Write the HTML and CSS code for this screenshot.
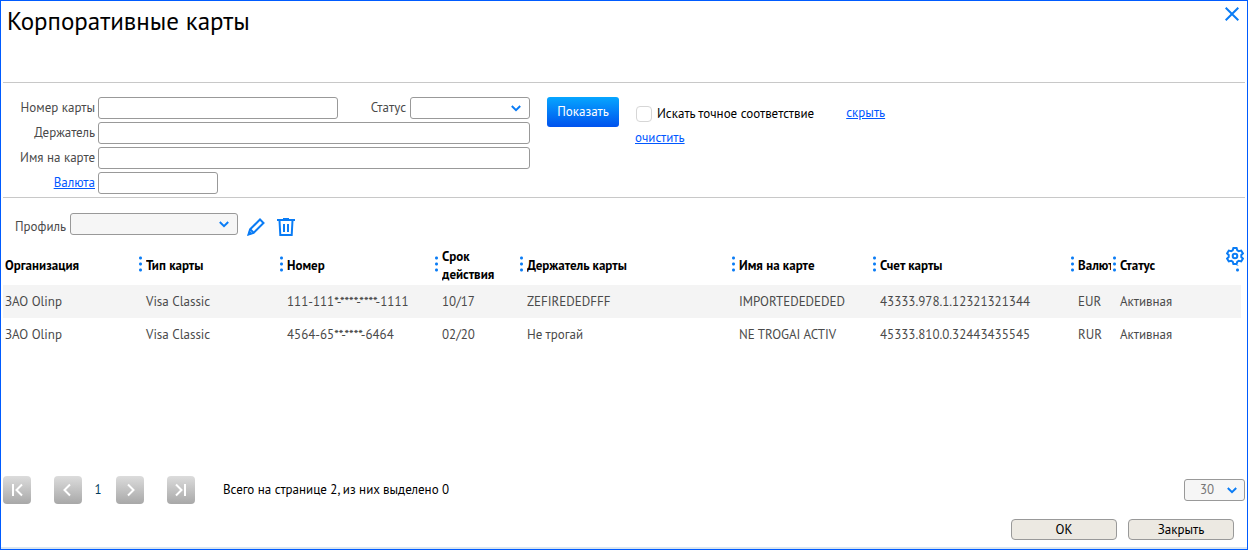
FILE: index.html
```html
<!DOCTYPE html>
<html lang="ru">
<head>
<meta charset="utf-8">
<meta name="viewport" content="width=device-width, initial-scale=1">
<title>Корпоративные карты</title>
<link rel="stylesheet" href="styles.css">
</head>
<body>
<main class="window">
  <header class="window-header">
    <h1 class="title">Корпоративные карты</h1>
    <button class="icon-button close" type="button" aria-label="Закрыть окно">
      <svg width="14" height="14" viewBox="0 0 14 14"><path d="M.7.7l12.600 12.600M13.300.7L.7 13.300"/></svg>
    </button>
  </header>

  <form class="filter">
    <div class="fields">
      <label class="label" for="number">Номер карты</label>
      <div class="field-line">
        <input class="input number" id="number" type="text">
        <label class="label status-label" for="status">Статус</label>
        <select class="input select status" id="status"><option></option></select>
      </div>
      <label class="label" for="holder">Держатель</label>
      <input class="input" id="holder" type="text">
      <label class="label" for="name">Имя на карте</label>
      <input class="input" id="name" type="text">
      <a class="link label" href="#currency" id="currency-label">Валюта</a>
      <input class="input currency" id="currency" type="text" aria-labelledby="currency-label">
    </div>
    <button class="show" type="button">Показать</button>
    <div class="options">
      <label class="exact"><input class="checkbox" type="checkbox">Искать точное соответствие</label>
      <a class="link clear" href="#clear">очистить</a>
    </div>
    <a class="link hide" href="#hide">скрыть</a>
  </form>

  <div class="profile-bar">
    <label class="profile-label" for="profile">Профиль</label>
    <select class="input select muted profile" id="profile"><option></option></select>
    <button class="icon-button tool" type="button" aria-label="Изменить">
      <svg width="18" height="18" viewBox="0 0 18 18"><path d="M1.500 16.500l1.600-5.100L13 1.500l3.500 3.500L6.600 14.900z"/><path d="M3.200 11.300l3.500 3.500"/><path class="solid" d="M.5 17.500l1.700-5 3.300 3.300z"/></svg>
    </button>
    <button class="icon-button tool trash" type="button" aria-label="Удалить">
      <svg width="18" height="18" viewBox="0 0 18 18"><path d="M0 2h18M6 1h6M2.500 2.500l.8 14.500h11.400l.8-14.500M7 6v8M11 6v8"/></svg>
    </button>
  </div>

  <section class="cards">
    <button class="icon-button gear" type="button" aria-label="Настройка столбцов">
      <svg width="18" height="18" viewBox="0 0 18 18"><path d="M7.400 1h3.200l.7 2.300 1.500.9 2.400-.6 1.700 2.800L15.300 8v2l1.600 1.600-1.700 2.800-2.400-.6-1.500.9-.7 2.300H7.400l-.7-2.300-1.500-.9-2.400.6-1.700-2.800L2.700 10V8L1.100 6.400l1.700-2.800 2.400.6 1.500-.9z"/><circle cx="9" cy="9" r="2.300"/></svg>
    </button>
    <table class="table">
      <colgroup>
        <col class="c-org"><col class="c-type"><col class="c-number"><col class="c-term"><col class="c-holder"><col class="c-name"><col class="c-account"><col class="c-currency"><col class="c-status">
      </colgroup>
      <thead>
        <tr>
          <th scope="col"><div class="head">Организация</div></th>
          <th scope="col"><div class="head">Тип карты</div></th>
          <th scope="col"><div class="head">Номер</div></th>
          <th scope="col"><div class="head wrap">Срок действия</div></th>
          <th scope="col"><div class="head">Держатель карты</div></th>
          <th scope="col"><div class="head">Имя на карте</div></th>
          <th scope="col"><div class="head">Счет карты</div></th>
          <th scope="col"><div class="head">Валюта</div></th>
          <th scope="col"><div class="head">Статус</div></th>
        </tr>
      </thead>
      <tbody>
        <tr><td>ЗАО Olinp</td><td>Visa Classic</td><td>111-111*-****-****-1111</td><td>10/17</td><td>ZEFIREDEDFFF</td><td>IMPORTEDEDEDED</td><td>43333.978.1.12321321344</td><td>EUR</td><td>Активная</td></tr>
        <tr><td>ЗАО Olinp</td><td>Visa Classic</td><td>4564-65**-****-6464</td><td>02/20</td><td>Не трогай</td><td>NE TROGAI ACTIV</td><td>45333.810.0.32443435545</td><td>RUR</td><td>Активная</td></tr>
      </tbody>
    </table>
  </section>

  <nav class="pager" aria-label="Страницы">
    <button class="page-button" type="button" aria-label="Первая страница"><svg width="28" height="28" viewBox="0 0 28 28"><path d="M10 8v12M19 8.500l-5.500 5.500 5.500 5.500"/></svg></button>
    <button class="page-button prev" type="button" aria-label="Предыдущая страница"><svg width="28" height="28" viewBox="0 0 28 28"><path d="M16 8.500L10.500 14l5.500 5.500"/></svg></button>
    <span class="page">1</span>
    <button class="page-button" type="button" aria-label="Следующая страница"><svg width="28" height="28" viewBox="0 0 28 28"><path d="M12 8.500l5.500 5.500-5.500 5.500"/></svg></button>
    <button class="page-button last" type="button" aria-label="Последняя страница"><svg width="28" height="28" viewBox="0 0 28 28"><path d="M9 8.500l5.500 5.500L9 19.500M18 8v12"/></svg></button>
    <span class="summary">Всего на странице 2, из них выделено 0</span>
    <select class="input select muted size" aria-label="Строк на странице"><option>30</option></select>
  </nav>

  <footer class="actions">
    <button class="action" type="button">OK</button>
    <button class="action" type="button">Закрыть</button>
  </footer>
</main>
</body>
</html>
```

FILE: styles.css
```css
* {
  box-sizing: border-box;
}

body {
  margin: 0;
  background: #fff;
  color: #4a4a4a;
  font: 13px/18px "PT Sans", "Noto Sans", "Open Sans", sans-serif;
}

button,
input,
select {
  margin: 0;
  font: inherit;
}

button {
  padding: 0;
  cursor: pointer;
}

.window {
  display: flex;
  flex-direction: column;
  min-height: 100vh;
  padding: 0 2px;
  border: 1px solid #005bff;
  box-shadow: inset 0 -2px #dae6ef;
}

.window-header {
  display: flex;
  justify-content: space-between;
  align-items: flex-start;
  min-height: 82px;
  border-bottom: 1px solid #c8c8c8;
}

.title {
  margin: 0;
  padding-left: 4px;
  color: #000;
  font-size: 25px;
  font-weight: 400;
  line-height: 40px;
}

.icon-button {
  display: flex;
  border: 0;
  background: none;
}

.icon-button svg {
  fill: none;
  stroke: #0a7cf5;
  stroke-width: 2;
}

.icon-button .solid {
  fill: #0a7cf5;
  stroke: none;
}

.close {
  padding: 6px;
}

.filter {
  display: flex;
  align-items: flex-start;
  padding: 14px 0 3px;
  border-bottom: 1px solid #c8c8c8;
}

.fields {
  display: grid;
  grid-template-columns: 92px minmax(0, 432px);
  gap: 3px;
}

.field-line {
  display: flex;
}

.label {
  justify-self: end;
  line-height: 22px;
}

.input {
  width: 100%;
  height: 22px;
  padding: 0 4px;
  border: 1px solid #999;
  border-radius: 3px;
  background-color: #fff;
  color: #4a4a4a;
}

.select {
  appearance: none;
  background-image: url("data:image/svg+xml,%3Csvg xmlns='http://www.w3.org/2000/svg' width='10' height='7'%3E%3Cpath d='M.8 1l4.200 4.200L9.200 1' fill='none' stroke='%230a7cf5' stroke-width='2'/%3E%3C/svg%3E");
  background-repeat: no-repeat;
  background-position: right 8px center;
}

.muted {
  background-color: #f6f6f6;
}

.number {
  flex: 0 1 240px;
}

.status-label {
  margin-left: auto;
}

.status {
  flex: 0 0 120px;
  margin-left: 4px;
}

.currency {
  width: 120px;
}

.link {
  color: #0057ff;
}

.show {
  width: 72px;
  height: 30px;
  margin-left: 17px;
  border: 0;
  border-radius: 3px;
  background: linear-gradient(#06a6ff, #0052ee);
  color: #fff;
}

.options {
  display: flex;
  flex-direction: column;
  align-items: flex-start;
  gap: 6px;
  padding: 8px 0 0 16px;
}

.exact {
  display: flex;
  align-items: center;
  gap: 5px;
  padding-left: 1px;
  color: #000;
}

.checkbox {
  appearance: none;
  width: 16px;
  height: 16px;
  border: 1px solid #d6d6d6;
  border-radius: 4px;
  background: #fff;
}

.checkbox:checked {
  background: #0a7cf5;
}

.hide {
  margin: 7px 0 0 32px;
}

.profile-bar {
  display: flex;
  align-items: flex-start;
  padding: 15px 0 12px 12px;
}

.profile-label {
  padding-top: 5px;
  line-height: 17px;
}

.profile {
  width: 168px;
  margin-left: 4px;
}

.tool {
  margin: 5px 0 0 9px;
}

.trash {
  margin-left: 12px;
}

.cards {
  position: relative;
  flex: 1;
  padding-right: 4px;
}

.gear {
  position: absolute;
  top: -1px;
  right: 1px;
  z-index: 1;
  background: #fff;
}

.table {
  width: 100%;
  border-collapse: collapse;
  table-layout: fixed;
}

.c-org,
.c-type,
.c-name {
  width: 141px;
}

.c-number {
  width: 155px;
}

.c-term {
  width: 85px;
}

.c-holder {
  width: 212px;
}

.c-account {
  width: 198px;
}

.c-currency {
  width: 42px;
}

.c-status {
  width: 123px;
}

.table th {
  position: relative;
  height: 37px;
  padding: 0 7px 1px 2px;
  color: #000;
  font-weight: 700;
  text-align: left;
}

.table th::after {
  content: "";
  position: absolute;
  top: 7px;
  right: 1px;
  width: 5px;
  height: 18px;
  background: radial-gradient(circle, #0a7cf5 1px, transparent 2px) 0 0 / 5px 6px;
}

.head {
  overflow: hidden;
  white-space: nowrap;
}

.wrap {
  white-space: normal;
}

.table td {
  height: 33px;
  padding: 0 2px;
  white-space: nowrap;
}

.table tbody tr:nth-child(odd) {
  background: #f4f4f4;
}

.pager {
  display: flex;
  align-items: center;
  color: #000;
}

.page-button {
  display: flex;
  border: 0;
  border-radius: 4px;
  background: linear-gradient(#dcdcdc, #a8a8a8);
}

.page-button svg {
  fill: none;
  stroke: #fff;
  stroke-width: 2;
}

.prev,
.last {
  margin-left: 23px;
}

.page {
  width: 34px;
  padding-right: 2px;
  color: #003a5c;
  text-align: center;
}

.summary {
  margin-left: 28px;
}

.size {
  width: 61px;
  margin-left: auto;
  padding-left: 15px;
  color: #777;
}

.size.select {
  background-position: right 7px center;
}

.actions {
  display: flex;
  justify-content: flex-end;
  gap: 11px;
  padding: 15px 11px 9px 0;
}

.action {
  width: 106px;
  height: 21px;
  border: 1px solid #999;
  border-radius: 4px;
  background: #ece9e2;
  color: #000;
}
```
